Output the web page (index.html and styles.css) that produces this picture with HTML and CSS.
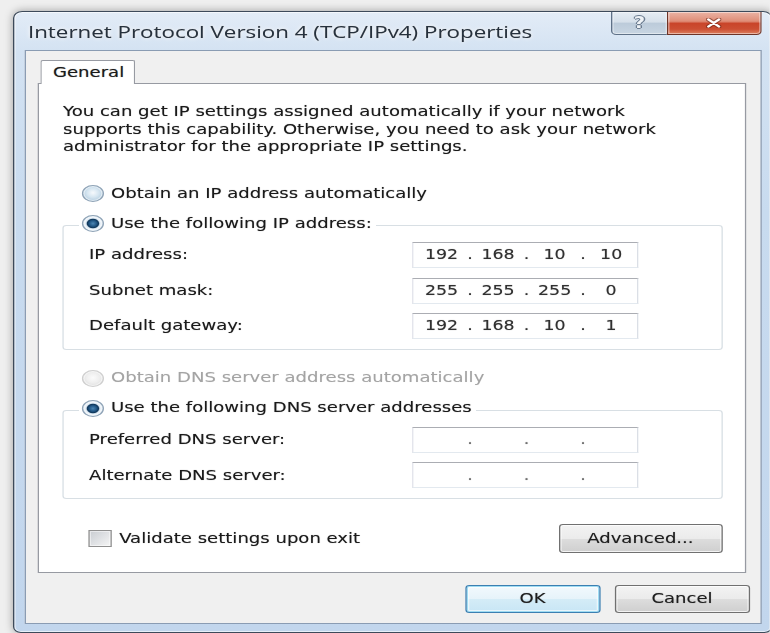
FILE: index.html
```html
<!DOCTYPE html>
<html lang="en">
<head>
<meta charset="utf-8">
<title>Internet Protocol Version 4 (TCP/IPv4) Properties</title>
<link rel="stylesheet" href="styles.css">
</head>
<body>
<div class="screen">
  <div class="window">
    <div class="titlebar">
      <span class="title">Internet Protocol Version 4 (TCP/IPv4) Properties</span>
      <div class="caption-buttons">
        <span class="cap cap-help">?</span>
        <span class="cap cap-close">
          <svg width="12" height="10" viewBox="0 0 12 10">
            <path d="M2 1.5 L10 8.5 M10 1.5 L2 8.5" stroke="#6a2417" stroke-width="4.2" stroke-linecap="round" fill="none" opacity="0.55"/>
            <path d="M2 1.5 L10 8.5 M10 1.5 L2 8.5" stroke="#ffffff" stroke-width="2.2" stroke-linecap="round" fill="none"/>
          </svg>
        </span>
      </div>
    </div>

    <div class="client">
      <div class="tabs"><span class="tab">General</span></div>

      <div class="panel">
        <p class="intro">You can get IP settings assigned automatically if your network<br>supports this capability. Otherwise, you need to ask your network<br>administrator for the appropriate IP settings.</p>

        <label class="option option-first"><span class="radio"></span>Obtain an IP address automatically</label>

        <fieldset class="group">
          <legend class="option"><span class="radio checked"></span>Use the following IP address:</legend>
          <div class="row">
            <span class="label">IP address:</span>
            <span class="ip-field"><span class="seg">192</span><span class="dot">.</span><span class="seg">168</span><span class="dot">.</span><span class="seg">10</span><span class="dot">.</span><span class="seg">10</span></span>
          </div>
          <div class="row">
            <span class="label">Subnet mask:</span>
            <span class="ip-field"><span class="seg">255</span><span class="dot">.</span><span class="seg">255</span><span class="dot">.</span><span class="seg">255</span><span class="dot">.</span><span class="seg">0</span></span>
          </div>
          <div class="row">
            <span class="label">Default gateway:</span>
            <span class="ip-field"><span class="seg">192</span><span class="dot">.</span><span class="seg">168</span><span class="dot">.</span><span class="seg">10</span><span class="dot">.</span><span class="seg">1</span></span>
          </div>
        </fieldset>

        <label class="option option-dns disabled"><span class="radio"></span>Obtain DNS server address automatically</label>

        <fieldset class="group">
          <legend class="option"><span class="radio checked"></span>Use the following DNS server addresses</legend>
          <div class="row">
            <span class="label">Preferred DNS server:</span>
            <span class="ip-field empty"><span class="seg"></span><span class="dot">.</span><span class="seg"></span><span class="dot">.</span><span class="seg"></span><span class="dot">.</span><span class="seg"></span></span>
          </div>
          <div class="row">
            <span class="label">Alternate DNS server:</span>
            <span class="ip-field empty"><span class="seg"></span><span class="dot">.</span><span class="seg"></span><span class="dot">.</span><span class="seg"></span><span class="dot">.</span><span class="seg"></span></span>
          </div>
        </fieldset>

        <div class="footer-row">
          <label class="check"><span class="checkbox"></span>Validate settings upon exit</label>
          <button class="btn btn-advanced" type="button">Advanced...</button>
        </div>
      </div>

      <div class="dialog-buttons">
        <button class="btn btn-default" type="button">OK</button>
        <button class="btn" type="button">Cancel</button>
      </div>
    </div>
  </div>
</div>
</body>
</html>
```

FILE: styles.css
```css
html, body {
  margin: 0;
  height: 100%;
  overflow: hidden;
  background: #efefef;
}

body {
  font-family: "DejaVu Sans", Verdana, sans-serif;
  font-size: 13.9px;
  line-height: 17.5px;
  color: #1a1a1a;
  text-shadow: 0 0 0.8px rgba(0, 0, 0, 0.45);
}

.screen {
  width: 592.3px;
  height: 633px;
  box-sizing: border-box;
  padding-top: 11px;
  overflow: hidden;
  transform: scaleX(1.3);
  transform-origin: 0 0;
}

/* glass window frame */
.window {
  margin-left: 10px;
  width: 583.6px;
  box-sizing: border-box;
  border: 1px solid #3d4a5a;
  border-radius: 7px 7px 6px 6px;
  padding: 0 7px 8px 8.2px;
  background: linear-gradient(180deg, #e3ecf7 0, #d3e2f2 40px, #c8dbef 200px, #c2d6ed 100%);
  box-shadow: 0 0 7px rgba(0, 0, 0, 0.35), inset 0 0 0 1px rgba(255, 255, 255, 0.6);
}

.titlebar {
  display: flex;
  justify-content: space-between;
  align-items: flex-start;
  height: 38px;
}

.title {
  font-family: "Open Sans", "Noto Sans", sans-serif;
  font-size: 17.2px;
  line-height: 22px;
  padding: 9px 0 0 2.3px;
  color: #26313d;
  text-shadow: 0 0 5px #fff, 0 0 2px #fff, 0 0 0.8px rgba(0, 0, 0, 0.5);
  white-space: nowrap;
}

.caption-buttons {
  display: flex;
}

.cap {
  height: 23px;
  box-sizing: border-box;
  display: flex;
  align-items: center;
  justify-content: center;
  border: 1px solid #5f7187;
  border-top: none;
  box-shadow: inset 0 0 0 1px rgba(255, 255, 255, 0.45);
}

.cap-help {
  width: 42.3px;
  border-right: none;
  border-radius: 0 0 0 4px;
  background: linear-gradient(180deg, #e6edf4 0, #d6e0ea 45%, #bccbda 52%, #c8d5e2 100%);
  font: bold 15px/1 "DejaVu Sans", sans-serif;
  color: #eef2f6;
  text-shadow: 1px 0 0 #6b7c90, -1px 0 0 #6b7c90, 0 1px 0 #6b7c90, 0 -1px 0 #6b7c90;
}

.cap-close {
  width: 73px;
  border-color: #6e3326;
  border-radius: 0 0 4px 0;
  background: linear-gradient(180deg, #ebb3a4 0, #df8d77 42%, #c9452a 52%, #cc4f33 78%, #dd805f 100%);
}

/* dialog client area */
.client {
  height: 574px;
  box-sizing: border-box;
  border: 1px solid #8a9cb3;
  background: #f0f0f0;
  padding: 9px 11px 0 9px;
}

.tabs {
  display: flex;
  padding-left: 1.6px;
}

.tab {
  position: relative;
  z-index: 1;
  background: #fff;
  border: 1px solid #979aa2;
  border-bottom: none;
  border-radius: 2px 2px 0 0;
  padding: 2.5px 7px 3px 9px;
  margin-bottom: -1px;
}

.panel {
  background: #fff;
  border: 1px solid #979aa2;
  padding: 19px 17px 19px 18.3px;
}

.intro {
  margin: 0;
}

.option {
  display: flex;
  align-items: center;
}

.option-first {
  margin: 29px 0 0 14.5px;
}

.option-dns {
  margin: 19.25px 0 0 14.5px;
}

.disabled {
  color: #a4a4a4;
  text-shadow: 0 0 0.8px rgba(0, 0, 0, 0.15);
}

/* radio buttons */
.radio {
  flex: none;
  width: 17px;
  height: 17px;
  box-sizing: border-box;
  border-radius: 50%;
  margin-right: 5.4px;
  border: 1px solid #8fa3b6;
  background: radial-gradient(circle 8px at 50% 45%, #f6f9fc 0, #d6e6f1 55%, #b7cfe1 100%);
  box-shadow: inset 0 0 0 1px rgba(255, 255, 255, 0.55);
}

.radio.checked {
  background: radial-gradient(circle 7.5px at 50% 50%, #4b86b4 0, #1f5381 3px, #0f3659 4.3px, #d3e2ee 5.2px, #f3f7fb 6.2px, #c7d9e8 7.5px);
}

.disabled .radio {
  border-color: #cfcfcf;
  background: radial-gradient(circle 8px at 50% 45%, #fbfbfb 0, #efefef 60%, #e2e2e2 100%);
}

/* group boxes */
.group {
  margin: 12.5px 0 0;
  padding: 5px 10px 10px 19px;
  border: 1px solid #d8dfe4;
  border-radius: 3px;
  min-width: 0;
}

.group > legend {
  padding: 0 3px 5px 2px;
  margin-left: -7.5px;
}

.row {
  display: flex;
  align-items: center;
  height: 26px;
}

.row + .row {
  margin-top: 9.5px;
}

.label {
  flex: none;
  width: 248.4px;
}

/* IP address entry */
.ip-field {
  flex: none;
  width: 174px;
  height: 26px;
  box-sizing: border-box;
  display: flex;
  align-items: center;
  padding-left: 2px;
  background: #fff;
  border: 1px solid;
  border-color: #abadb3 #dbdfe6 #e3e9ef #e2e3ea;
  font-size: 13.4px;
  color: #303030;
}

.seg {
  flex: 1;
  text-align: center;
}

.dot {
  width: 4px;
  text-align: center;
}

.empty .dot {
  color: #707070;
}

/* bottom of the tab page */
.footer-row {
  display: flex;
  justify-content: space-between;
  align-items: center;
  margin-top: 25px;
  padding-left: 19.2px;
}

.check {
  display: flex;
  align-items: center;
}

.checkbox {
  flex: none;
  width: 18px;
  height: 17px;
  box-sizing: border-box;
  margin-right: 6px;
  border: 1px solid #8f8f8f;
  background: linear-gradient(135deg, #c9cdd2 0, #dfe1e4 50%, #f5f5f5 100%);
  box-shadow: inset 0 0 0 1px rgba(255, 255, 255, 0.5);
}

/* push buttons */
.btn {
  font: inherit;
  color: #1e1e1e;
  text-shadow: 0 0 0.8px rgba(0, 0, 0, 0.45);
  height: 29px;
  padding: 0;
  border: 1px solid #707070;
  border-radius: 3px;
  background: linear-gradient(180deg, #f3f3f3 0, #ebebeb 50%, #dddddd 51%, #cfcfcf 100%);
  box-shadow: inset 0 0 0 1px rgba(255, 255, 255, 0.75);
}

.btn-advanced {
  width: 126px;
}

.dialog-buttons {
  display: flex;
  justify-content: flex-end;
  gap: 11px;
  margin: 11.75px -3px 0 0;
}

.dialog-buttons .btn {
  width: 104px;
  height: 28px;
}

.btn-default {
  border-color: #3c7fb1;
  background: linear-gradient(180deg, #f2f9fd 0, #e6f3fa 50%, #d4ecf7 51%, #c8e6f5 100%);
  box-shadow: inset 0 0 0 1px #9fdcf3, inset 0 0 0 2px rgba(255, 255, 255, 0.6);
}
```
